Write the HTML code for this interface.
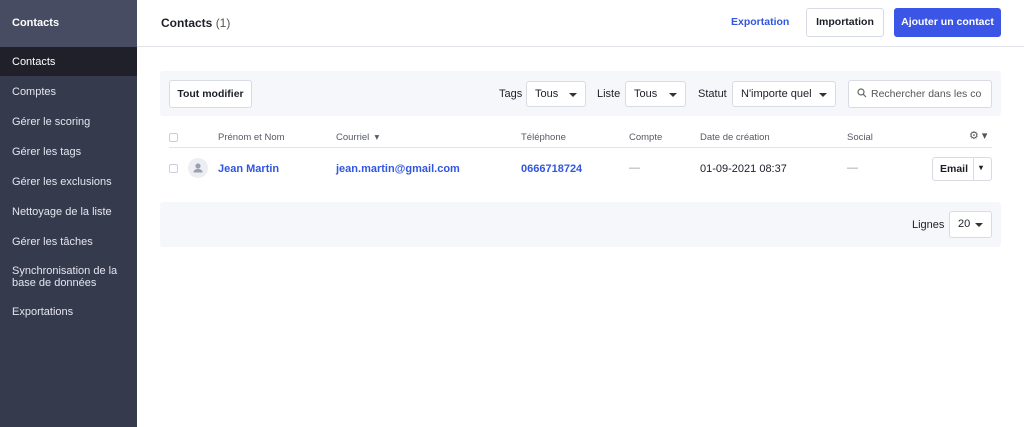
<!DOCTYPE html>
<html><head><meta charset="utf-8"><style>
*{box-sizing:border-box;margin:0;padding:0}
body{width:1024px;height:427px;overflow:hidden;font-family:"Liberation Sans",sans-serif;font-size:11px;color:#1d1f29;background:#fff;position:relative}
.sb{position:absolute;left:0;top:0;width:137px;height:427px;background:#363a4d}
.sbh{height:47px;background:#474c63;color:#fff;font-weight:bold;font-size:11px;padding:17px 12px}
.sb .it{position:absolute;left:12px;color:#e4e6ee;font-size:11px;line-height:12px}
.act{position:absolute;left:0;top:47px;width:137px;height:29px;background:#1f2029}
.a{position:absolute;white-space:nowrap}
.btn{position:absolute;border:1px solid #d8dbe3;border-radius:3px;background:#fff;font-size:10.5px;text-align:center;white-space:nowrap}
.blue{color:#3156e0}
.sel{position:absolute;border:1px solid #d8dbe3;border-radius:3px;background:#fff;height:26px;line-height:24px;padding:0 8px;font-size:11px;white-space:nowrap;overflow:hidden}
.dd:after{content:"";position:absolute;right:8px;top:11px;border:4px solid transparent;border-top-color:#333;border-bottom:0}
.th{position:absolute;top:132px;font-size:9.5px;color:#555a66;white-space:nowrap}
.cb{position:absolute;width:9px;height:9px;border:1px solid #ccd;border-radius:2px}
</style></head><body>
<div class="sb">
<div class="sbh">Contacts</div>
<div class="act"></div>
<div class="it" style="top:56px;color:#fff">Contacts</div>
<div class="it" style="top:86px">Comptes</div>
<div class="it" style="top:116px">Gérer le scoring</div>
<div class="it" style="top:146px">Gérer les tags</div>
<div class="it" style="top:176px">Gérer les exclusions</div>
<div class="it" style="top:206px">Nettoyage de la liste</div>
<div class="it" style="top:236px">Gérer les tâches</div>
<div class="it" style="top:265px">Synchronisation de la<br>base de données</div>
<div class="it" style="top:306px">Exportations</div>
</div>
<div class="a" style="left:137px;top:46px;width:887px;height:1px;background:#e2e4ea"></div>
<div class="a" style="left:161px;top:16px;font-weight:bold;font-size:12px">Contacts <span style="font-weight:normal;color:#555">(1)</span></div>
<div class="a blue" style="left:731px;top:16px;font-weight:bold;font-size:10.5px">Exportation</div>
<div class="btn" style="left:806px;top:8px;width:78px;height:29px;line-height:27px;font-weight:bold">Importation</div>
<div class="btn" style="left:894px;top:8px;width:107px;height:29px;line-height:27px;font-weight:bold;background:#3b55e6;border-color:#3b55e6;color:#fff">Ajouter un contact</div>

<div class="a" style="left:160px;top:71px;width:841px;height:45px;background:#f5f7fb;border-radius:3px"></div>
<div class="btn" style="left:169px;top:80px;width:83px;height:28px;line-height:26px;font-weight:bold">Tout modifier</div>
<div class="a" style="left:499px;top:88px">Tags</div>
<div class="sel dd" style="left:526px;top:81px;width:60px">Tous</div>
<div class="a" style="left:597px;top:88px">Liste</div>
<div class="sel dd" style="left:625px;top:81px;width:61px">Tous</div>
<div class="a" style="left:698px;top:88px">Statut</div>
<div class="sel dd" style="left:732px;top:81px;width:104px">N'importe quel</div>
<div class="sel" style="left:848px;top:80px;width:144px;height:28px;line-height:26px;color:#555;font-size:10.5px"><svg width="10" height="10" style="vertical-align:-1px;margin-right:4px"><circle cx="4" cy="4" r="3" fill="none" stroke="#666" stroke-width="1.2"/><path d="M6.3 6.3L9 9" stroke="#666" stroke-width="1.2"/></svg>Rechercher dans les co</div>

<div class="cb" style="left:169px;top:133px"></div>
<div class="th" style="left:218px">Prénom et Nom</div>
<div class="th" style="left:336px">Courriel &nbsp;▾</div>
<div class="th" style="left:521px">Téléphone</div>
<div class="th" style="left:629px">Compte</div>
<div class="th" style="left:700px">Date de création</div>
<div class="th" style="left:847px">Social</div>
<div class="th" style="left:969px;color:#555;font-size:11px;top:129px">⚙ ▾</div>
<div class="a" style="left:169px;top:147px;width:823px;height:1px;background:#e2e4ea"></div>
<div class="cb" style="left:169px;top:164px"></div>
<div class="a" style="left:188px;top:158px;width:20px;height:20px;border-radius:50%;background:#eceef3"><svg width="20" height="20"><circle cx="10" cy="8" r="2.6" fill="#9aa0ad"/><path d="M5.5 14.5c0-2.5 2-3.5 4.5-3.5s4.5 1 4.5 3.5z" fill="#9aa0ad"/></svg></div>
<div class="a blue" style="left:218px;top:163px;font-weight:bold">Jean Martin</div>
<div class="a blue" style="left:336px;top:163px;font-weight:bold">jean.martin@gmail.com</div>
<div class="a blue" style="left:521px;top:163px;font-weight:bold">0666718724</div>
<div class="a" style="left:629px;top:162px;color:#999">—</div>
<div class="a" style="left:700px;top:163px">01-09-2021 08:37</div>
<div class="a" style="left:847px;top:162px;color:#999">—</div>
<div class="btn" style="left:932px;top:157px;width:60px;height:24px;text-align:left;padding:5px 0 0 7px;font-weight:bold">Email<span style="position:absolute;left:40px;top:0;width:1px;height:22px;background:#d8dbe3"></span><span style="position:absolute;left:46px;top:5px;font-size:8px">▾</span></div>

<div class="a" style="left:160px;top:202px;width:841px;height:45px;background:#f5f7fb;border-radius:3px"></div>
<div class="a" style="left:912px;top:219px">Lignes</div>
<div class="sel dd" style="left:949px;top:211px;width:43px;height:27px;line-height:25px">20</div>
</body></html>
